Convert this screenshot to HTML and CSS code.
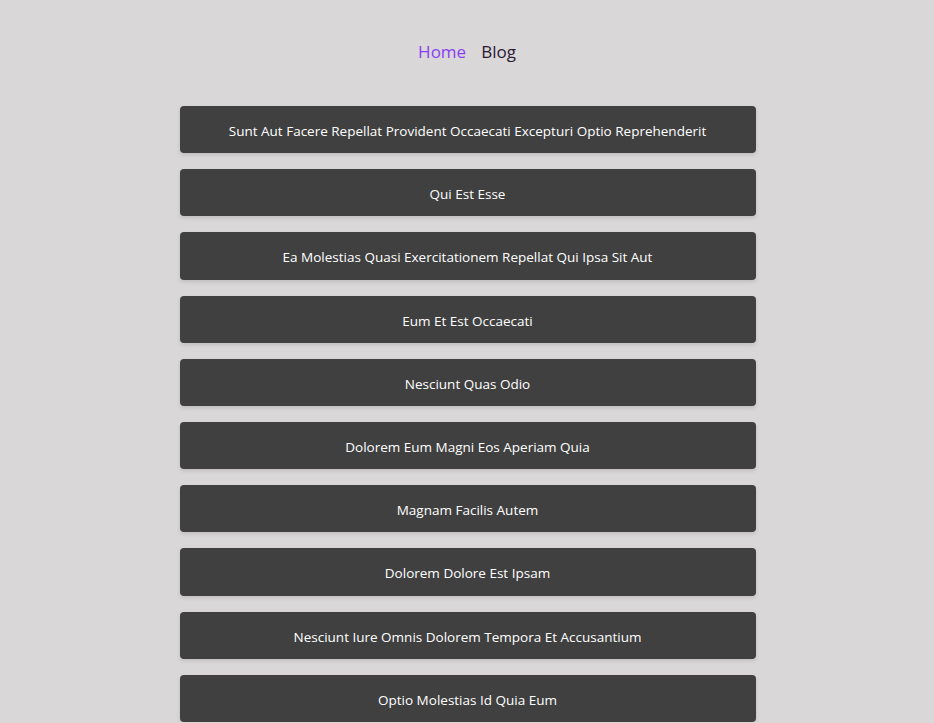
FILE: index.html
```html
<!DOCTYPE html>
<html>
<head>
<meta charset="utf-8">
<link rel="stylesheet" href="styles.css">
</head>
<body>
<nav class="nav">
  <a class="nav-link active" href="#">Home</a>
  <a class="nav-link" href="#">Blog</a>
</nav>
<main class="list">
  <div class="card">Sunt Aut Facere Repellat Provident Occaecati Excepturi Optio Reprehenderit</div>
  <div class="card">Qui Est Esse</div>
  <div class="card">Ea Molestias Quasi Exercitationem Repellat Qui Ipsa Sit Aut</div>
  <div class="card">Eum Et Est Occaecati</div>
  <div class="card">Nesciunt Quas Odio</div>
  <div class="card">Dolorem Eum Magni Eos Aperiam Quia</div>
  <div class="card">Magnam Facilis Autem</div>
  <div class="card">Dolorem Dolore Est Ipsam</div>
  <div class="card">Nesciunt Iure Omnis Dolorem Tempora Et Accusantium</div>
  <div class="card">Optio Molestias Id Quia Eum</div>
</main>
</body>
</html>
```
FILE: styles.css
```css
html, body {
  margin: 0;
  padding: 0;
}
body {
  background: #d9d7d8;
  font-family: "Open Sans", "Noto Sans", sans-serif;
}
.nav {
  display: flex;
  justify-content: center;
  gap: 15px;
  padding-top: 40px;
  height: 24px;
}
.nav-link {
  font-size: 17px;
  line-height: 24px;
  text-decoration: none;
  color: #2b1a33;
}
.nav-link.active {
  color: #8a3ef2;
}
.list {
  width: 576px;
  margin: 42px auto 0;
  padding-left: 1px;
  display: flex;
  flex-direction: column;
  gap: 16px;
}
.card {
  background: #404040;
  color: #ffffff;
  border-radius: 4px;
  box-shadow: 0 2px 4px rgba(0, 0, 0, 0.12);
  text-align: center;
  font-size: 13.5px;
  line-height: 19.2px;
  padding: 16px 0 12px;
}
```
